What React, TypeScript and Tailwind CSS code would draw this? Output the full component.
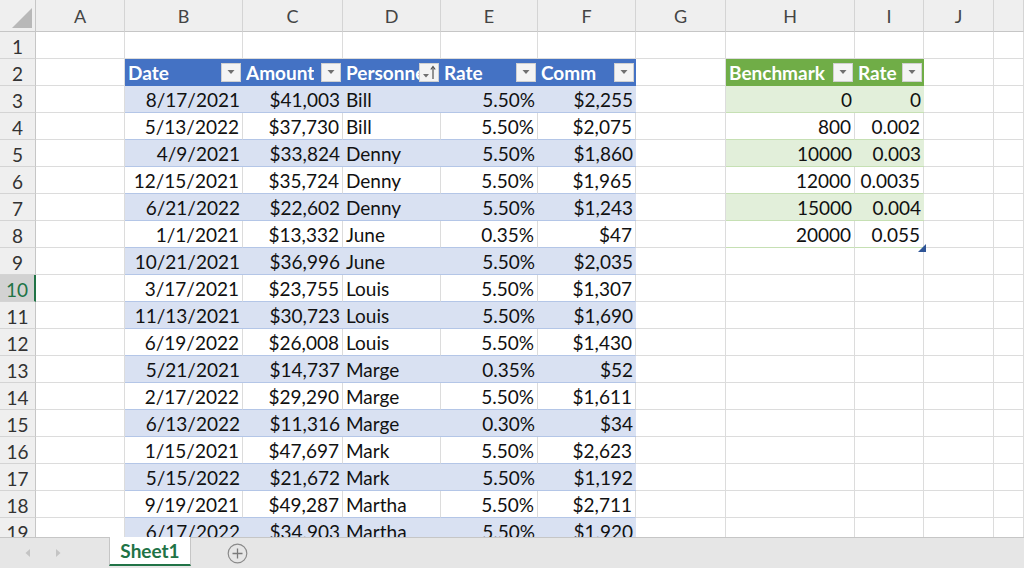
import React from 'react'

const COL_LETTERS = ['', 'A', 'B', 'C', 'D', 'E', 'F', 'G', 'H', 'I', 'J', '']
const GRID = 'grid grid-cols-[36px_89px_118px_100px_98px_97px_98px_90px_129px_69px_70px_1fr]'

type Sale = [string, string, string, string, string]

const sales: Sale[] = [
  ['8/17/2021', '$41,003', 'Bill', '5.50%', '$2,255'],
  ['5/13/2022', '$37,730', 'Bill', '5.50%', '$2,075'],
  ['4/9/2021', '$33,824', 'Denny', '5.50%', '$1,860'],
  ['12/15/2021', '$35,724', 'Denny', '5.50%', '$1,965'],
  ['6/21/2022', '$22,602', 'Denny', '5.50%', '$1,243'],
  ['1/1/2021', '$13,332', 'June', '0.35%', '$47'],
  ['10/21/2021', '$36,996', 'June', '5.50%', '$2,035'],
  ['3/17/2021', '$23,755', 'Louis', '5.50%', '$1,307'],
  ['11/13/2021', '$30,723', 'Louis', '5.50%', '$1,690'],
  ['6/19/2022', '$26,008', 'Louis', '5.50%', '$1,430'],
  ['5/21/2021', '$14,737', 'Marge', '0.35%', '$52'],
  ['2/17/2022', '$29,290', 'Marge', '5.50%', '$1,611'],
  ['6/13/2022', '$11,316', 'Marge', '0.30%', '$34'],
  ['1/15/2021', '$47,697', 'Mark', '5.50%', '$2,623'],
  ['5/15/2022', '$21,672', 'Mark', '5.50%', '$1,192'],
  ['9/19/2021', '$49,287', 'Martha', '5.50%', '$2,711'],
  ['6/17/2022', '$34,903', 'Martha', '5.50%', '$1,920'],
]

const bench: [string, string][] = [
  ['0', '0'],
  ['800', '0.002'],
  ['10000', '0.003'],
  ['12000', '0.0035'],
  ['15000', '0.004'],
  ['20000', '0.055'],
]

function FilterButton({ sorted }: { sorted?: boolean }) {
  return (
    <span className="ml-auto mr-[2px] flex h-[19px] w-[20px] shrink-0 items-center justify-center border border-[#d0d0d0] bg-[#f4f4f4]">
      {sorted ? (
        <svg width="18" height="17" viewBox="0 0 18 17">
          <path d="M3 10h6l-3 3.5z" fill="#707070" />
          <path d="M13 15V3" stroke="#505050" strokeWidth="1.2" />
          <path d="M10.8 5.5L13 2.5l2.2 3" stroke="#505050" strokeWidth="1.2" fill="none" />
        </svg>
      ) : (
        <svg width="10" height="6" viewBox="0 0 10 6">
          <path d="M1.5 1h7L5 5z" fill="#707070" />
        </svg>
      )}
    </span>
  )
}

function HeaderCell({ label, green, sorted }: { label: string; green?: boolean; sorted?: boolean }) {
  return (
    <div
      className={`flex items-center border-b overflow-hidden pl-[3px] font-bold text-white ${
        green ? 'bg-[#70ad47] border-[#70ad47]' : 'bg-[#4472c4] border-[#4472c4]'
      }`}
    >
      <span className="min-w-0 overflow-hidden whitespace-nowrap pt-[2px] leading-[24px]">{label}</span>
      <FilterButton sorted={sorted} />
    </div>
  )
}

function Cell({
  text,
  right,
  fill,
}: {
  text?: string
  right?: boolean
  fill?: 'blue' | 'blueWhite' | 'green' | 'greenWhite'
}) {
  let cls = 'border-r border-b border-[#dcdcdc] bg-white'
  if (fill === 'blue') cls = 'border-b border-[#b4c6e7] bg-[#d9e1f2]'
  if (fill === 'blueWhite') cls = 'border-r border-b border-r-[#dcdcdc] border-b-[#b4c6e7] bg-white'
  if (fill === 'green') cls = 'border-b border-[#c6e0b4] bg-[#e2efda]'
  if (fill === 'greenWhite') cls = 'border-r border-b border-r-[#dcdcdc] border-b-[#c6e0b4] bg-white'
  return (
    <div className={`flex items-center whitespace-nowrap px-[3px] pt-[2px] leading-[24px] ${right ? 'justify-end' : ''} ${cls}`}>
      {text}
    </div>
  )
}

function RowHeader({ n, active }: { n: number; active?: boolean }) {
  return (
    <div
      className={`flex items-center justify-center border-b border-[#d4d4d4] pt-[2px] ${
        active
          ? 'bg-[#d2d2d2] text-[#217346] border-r-2 border-r-[#217346]'
          : 'bg-[#efefef] text-[#333] border-r border-r-[#c6c6c6]'
      }`}
    >
      {n}
    </div>
  )
}

function SheetRow({ n }: { n: number }) {
  const cells: React.ReactNode[] = []
  const idx = n - 3
  for (let c = 1; c <= 11; c++) {
    const key = `${n}-${c}`
    if (n === 2 && c >= 2 && c <= 6) {
      const labels = ['Date', 'Amount', 'Personnel', 'Rate', 'Comm']
      cells.push(<HeaderCell key={key} label={labels[c - 2]} sorted={c === 4} />)
    } else if (n >= 3 && c >= 2 && c <= 6 && sales[idx]) {
      const row = sales[idx]
      cells.push(
        <Cell key={key} text={row[c - 2]} right={c !== 4} fill={n % 2 === 1 ? 'blue' : 'blueWhite'} />
      )
    } else if (n === 2 && (c === 8 || c === 9)) {
      cells.push(<HeaderCell key={key} label={c === 8 ? 'Benchmark' : 'Rate'} green />)
    } else if (n >= 3 && n <= 8 && (c === 8 || c === 9)) {
      cells.push(
        <Cell key={key} text={bench[idx][c - 8]} right fill={n % 2 === 1 ? 'green' : 'greenWhite'} />
      )
    } else {
      cells.push(<Cell key={key} />)
    }
  }
  return (
    <div className={`${GRID} h-[27px] shrink-0`}>
      <RowHeader n={n} active={n === 10} />
      {cells}
    </div>
  )
}

export default function App() {
  const rows = Array.from({ length: 19 }, (_, i) => i + 1)
  return (
    <div className="flex h-[568px] w-[1024px] flex-col overflow-hidden bg-white font-['Lato','Liberation_Sans',sans-serif] text-[19px] leading-none text-[#111]">
      <div className="relative flex h-[537px] flex-col overflow-hidden">
        {/* column letters */}
        <div className={`${GRID} h-[32px] shrink-0 bg-[#efefef] text-[18px] text-[#444]`}>
          {COL_LETTERS.map((l, i) => (
            <div
              key={i}
              className={`relative flex items-center justify-center border-b border-b-[#c6c6c6] ${
                i === 0 ? 'border-r border-r-[#c6c6c6]' : 'border-r border-r-[#d4d4d4]'
              }`}
            >
              {i === 0 ? (
                <svg width="20" height="20" viewBox="0 0 20 20" className="absolute bottom-[3px] right-[3px]">
                  <path d="M20 0V20H0z" fill="#b8b8b8" />
                </svg>
              ) : (
                l
              )}
            </div>
          ))}
        </div>
        {rows.map((n) => (
          <SheetRow key={n} n={n} />
        ))}
        {/* table resize handle */}
        <span className="absolute left-[918px] top-[244px] h-0 w-0 border-l-[4px] border-t-[4px] border-l-transparent border-t-transparent border-b-[4px] border-r-[4px] border-b-[#2f5597] border-r-[#2f5597]" />
      </div>

      {/* sheet tabs */}
      <div className="flex h-[31px] items-start border-t border-[#c6c6c6] bg-[#e6e6e6]">
        <div className="flex h-full w-[109px] items-center gap-[22px] pl-[24px]">
          <svg width="8" height="10" viewBox="0 0 8 10">
            <path d="M6 1L1.5 5 6 9z" fill="#c4c4c4" />
          </svg>
          <svg width="8" height="10" viewBox="0 0 8 10">
            <path d="M2 1l4.5 4L2 9z" fill="#c4c4c4" />
          </svg>
        </div>
        <div className="-mt-px flex h-[29px] w-[82px] items-center justify-center border-x border-[#c6c6c6] border-b-2 border-b-[#217346] bg-white text-[19px] font-bold text-[#217346]">
          Sheet1
        </div>
        <div className="flex h-full items-center pl-[36px]">
          <svg width="21" height="21" viewBox="0 0 21 21">
            <circle cx="10.5" cy="10.5" r="9.3" fill="none" stroke="#8a8a8a" strokeWidth="1.2" />
            <path d="M10.5 5.5v10M5.5 10.5h10" stroke="#7a7a7a" strokeWidth="1.3" />
          </svg>
        </div>
      </div>
    </div>
  )
}
